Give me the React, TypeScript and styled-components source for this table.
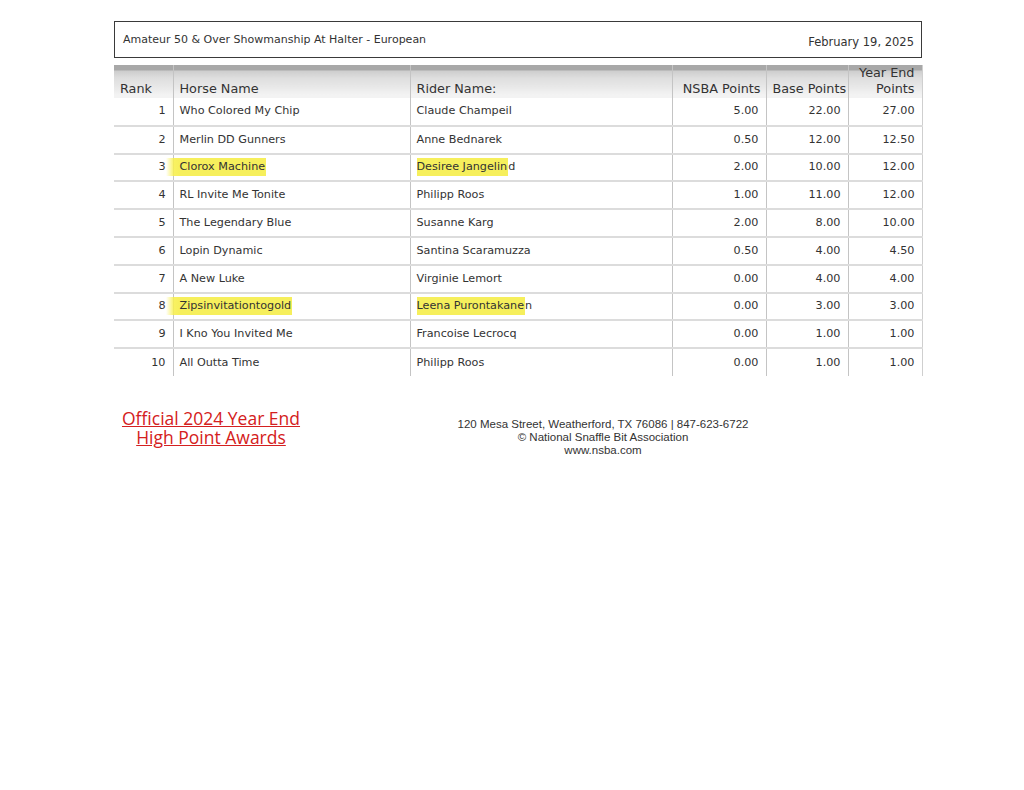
import React from "react";
import styled, { createGlobalStyle } from "styled-components";

const GlobalStyle = createGlobalStyle`
  body {
    margin: 0;
    background: #ffffff;
    font-family: "DejaVu Sans", "Open Sans", sans-serif;
  }
`;

const Page = styled.div`
  width: 808px;
  padding: 21px 0 0 114px;
`;

const TitleBox = styled.div`
  display: flex;
  align-items: center;
  justify-content: space-between;
  height: 35px;
  border: 1px solid #3a3a3a;
  padding: 0 7px 0 8px;
  font-size: 11px;
  color: #333;
`;

const Date = styled.span`
  font-size: 11.5px;
  padding-top: 4px;
`;

const Table = styled.table`
  margin-top: 7px;
  width: 808px;
  border-collapse: collapse;
  table-layout: fixed;
  border-right: 1px solid #cfcfcf;
`;

const HeadCell = styled.th<{ $w: number; $right?: boolean; $wrap?: boolean }>`
  box-sizing: border-box;
  width: ${(p) => p.$w}px;
  height: 30px;
  padding: 0 ${(p) => (p.$wrap ? 7 : 5)}px 1px 6px;
  text-align: ${(p) => (p.$right ? "right" : "left")};
  vertical-align: bottom;
  white-space: ${(p) => (p.$wrap ? "normal" : "nowrap")};
  font-weight: normal;
  font-size: 12.8px;
  line-height: 16px;
  color: #333;
  background: linear-gradient(
    to bottom,
    #a8a8a8 0px,
    #a8a8a8 5px,
    #cdcdcd 6px,
    #dedede 13px,
    #e8e8e8 22px,
    #f3f3f3 30px
  );
  border-left: 1px solid #c4c4c4;
  &:first-child {
    border-left: none;
  }
`;

const Row = styled.tr`
  height: 27.8px;
  border-top: 2px solid #dcdcdc;
  &:first-child {
    border-top: none;
  }
`;

const Cell = styled.td<{ $right?: boolean }>`
  box-sizing: border-box;
  padding: 0 7px 1px 6px;
  text-align: ${(p) => (p.$right ? "right" : "left")};
  font-size: 11.2px;
  color: #333;
  white-space: nowrap;
  overflow: visible;
  border-left: 1px solid #c4c4c4;
  &:first-child {
    border-left: none;
  }
`;

const Mark = styled.span<{ $lead?: boolean }>`
  background: ${(p) =>
    p.$lead
      ? "linear-gradient(to right, rgba(248,240,80,0) 0px, rgba(248,240,80,0.9) 8px, #f6ef5c 14px)"
      : "#f6ef5c"};
  margin-left: ${(p) => (p.$lead ? "-14px" : "0")};
  padding: 2px 1px 3px ${(p) => (p.$lead ? "14px" : "0")};
`;

const Footer = styled.div`
  display: flex;
  margin-top: 33px;
`;

const AwardLink = styled.a`
  width: 194px;
  text-align: center;
  font-family: "Open Sans", "DejaVu Sans", sans-serif;
  font-size: 17.5px;
  line-height: 19px;
  color: #d42020;
  text-decoration: underline;
`;

const Address = styled.div`
  width: 590px;
  padding-top: 9px;
  text-align: center;
  font-family: "Liberation Sans", Arial, sans-serif;
  font-size: 11.5px;
  line-height: 13px;
  color: #333;
`;

type Entry = {
  rank: number;
  horse: string;
  rider: string;
  nsba: string;
  base: string;
  total: string;
  mark?: number;
};

const entries: Entry[] = [
  { rank: 1, horse: "Who Colored My Chip", rider: "Claude Champeil", nsba: "5.00", base: "22.00", total: "27.00" },
  { rank: 2, horse: "Merlin DD Gunners", rider: "Anne Bednarek", nsba: "0.50", base: "12.00", total: "12.50" },
  { rank: 3, horse: "Clorox Machine", rider: "Desiree Jangelind", nsba: "2.00", base: "10.00", total: "12.00", mark: 16 },
  { rank: 4, horse: "RL Invite Me Tonite", rider: "Philipp Roos", nsba: "1.00", base: "11.00", total: "12.00" },
  { rank: 5, horse: "The Legendary Blue", rider: "Susanne Karg", nsba: "2.00", base: "8.00", total: "10.00" },
  { rank: 6, horse: "Lopin Dynamic", rider: "Santina Scaramuzza", nsba: "0.50", base: "4.00", total: "4.50" },
  { rank: 7, horse: "A New Luke", rider: "Virginie Lemort", nsba: "0.00", base: "4.00", total: "4.00" },
  { rank: 8, horse: "Zipsinvitationtogold", rider: "Leena Purontakanen", nsba: "0.00", base: "3.00", total: "3.00", mark: 17 },
  { rank: 9, horse: "I Kno You Invited Me", rider: "Francoise Lecrocq", nsba: "0.00", base: "1.00", total: "1.00" },
  { rank: 10, horse: "All Outta Time", rider: "Philipp Roos", nsba: "0.00", base: "1.00", total: "1.00" },
];

export default function App() {
  return (
    <Page>
      <GlobalStyle />
      <TitleBox>
        <span>Amateur 50 &amp; Over Showmanship At Halter - European</span>
        <Date>February 19, 2025</Date>
      </TitleBox>
      <Table>
        <thead>
          <tr>
            <HeadCell $w={59}>Rank</HeadCell>
            <HeadCell $w={237}>Horse Name</HeadCell>
            <HeadCell $w={262}>Rider Name:</HeadCell>
            <HeadCell $w={94} $right>NSBA Points</HeadCell>
            <HeadCell $w={82} $right>Base Points</HeadCell>
            <HeadCell $w={74} $right $wrap>Year End Points</HeadCell>
          </tr>
        </thead>
        <tbody>
          {entries.map((e) => (
            <Row key={e.rank}>
              <Cell $right>{e.rank}</Cell>
              <Cell>{e.mark ? <Mark $lead>{e.horse}</Mark> : e.horse}</Cell>
              <Cell>
                {e.mark ? (
                  <>
                    <Mark>{e.rider.slice(0, e.mark)}</Mark>
                    {e.rider.slice(e.mark)}
                  </>
                ) : (
                  e.rider
                )}
              </Cell>
              <Cell $right>{e.nsba}</Cell>
              <Cell $right>{e.base}</Cell>
              <Cell $right>{e.total}</Cell>
            </Row>
          ))}
        </tbody>
      </Table>
      <Footer>
        <AwardLink href="#">Official 2024 Year End High Point Awards</AwardLink>
        <Address>
          120 Mesa Street, Weatherford, TX 76086 | 847-623-6722
          <br />© National Snaffle Bit Association
          <br />
          www.nsba.com
        </Address>
      </Footer>
    </Page>
  );
}
